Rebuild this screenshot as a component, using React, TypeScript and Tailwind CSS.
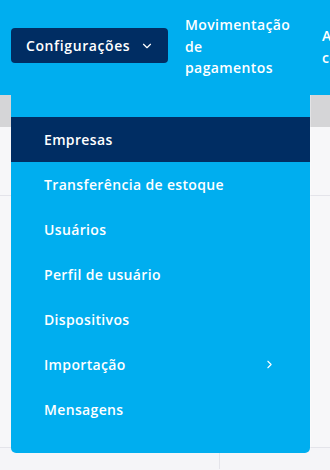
import { ChevronDown, ChevronRight } from 'lucide-react';

const menuItems = [
	{ label: 'Empresas', active: true },
	{ label: 'Transferência de estoque' },
	{ label: 'Usuários' },
	{ label: 'Perfil de usuário' },
	{ label: 'Dispositivos' },
	{ label: 'Importação', submenu: true },
	{ label: 'Mensagens' },
];

export default function App() {
	return (
		<div
			className="relative h-[470px] w-[330px] overflow-hidden bg-[#f5f5f8] text-white"
			style={{ fontFamily: '"Open Sans", "Noto Sans", sans-serif' }}
		>
			<header className="flex h-[95px] items-start gap-[17px] bg-[#00aeef] pl-[11px] pt-[14px]">
				<button
					type="button"
					className="mt-[14px] flex h-[35px] w-[157px] shrink-0 items-center gap-[10px] rounded-[4px] bg-[#002d63] pl-[15px] text-[14px] font-semibold tracking-[0.6px]"
				>
					Configurações
					<ChevronDown size={14} strokeWidth={2} />
				</button>
				<div className="w-[120px] shrink-0 text-[14px] leading-[21.5px] font-semibold tracking-[0.4px]">
					Movimentação
					<br />
					de
					<br />
					pagamentos
				</div>
				<div className="mt-[11px] shrink-0 text-[14px] leading-[21.5px] font-semibold tracking-[0.4px]">
					Arquivos
					<br />
					contábeis
				</div>
			</header>

			<div className="h-[32px] bg-[#d5d5d7]" />
			<div className="h-[69px] border-b border-[#e4e4ea] bg-[#f7f7f9]" />
			<div className="h-[252px] border-b border-[#e4e4ea] bg-[#f7f7f9]" />
			<div className="flex h-[21px]">
				<div className="w-[220px] border-r border-[#e4e4ea]" />
			</div>

			<nav className="absolute left-[11px] top-[95px] h-[358px] w-[299px] rounded-b-[5px] bg-[#00aeef] pt-[22px] shadow-[1px_0_0_rgba(255,255,255,0.35)]">
				{menuItems.map((item) => (
					<div
						key={item.label}
						className={`flex h-[45px] items-center justify-between pl-[33px] pr-[34px] text-[14px] font-semibold tracking-[0.35px] ${
							item.active ? 'bg-[#002d63]' : ''
						}`}
					>
						<span>{item.label}</span>
						{item.submenu ? <ChevronRight size={13} strokeWidth={2} /> : null}
					</div>
				))}
			</nav>
		</div>
	);
}
